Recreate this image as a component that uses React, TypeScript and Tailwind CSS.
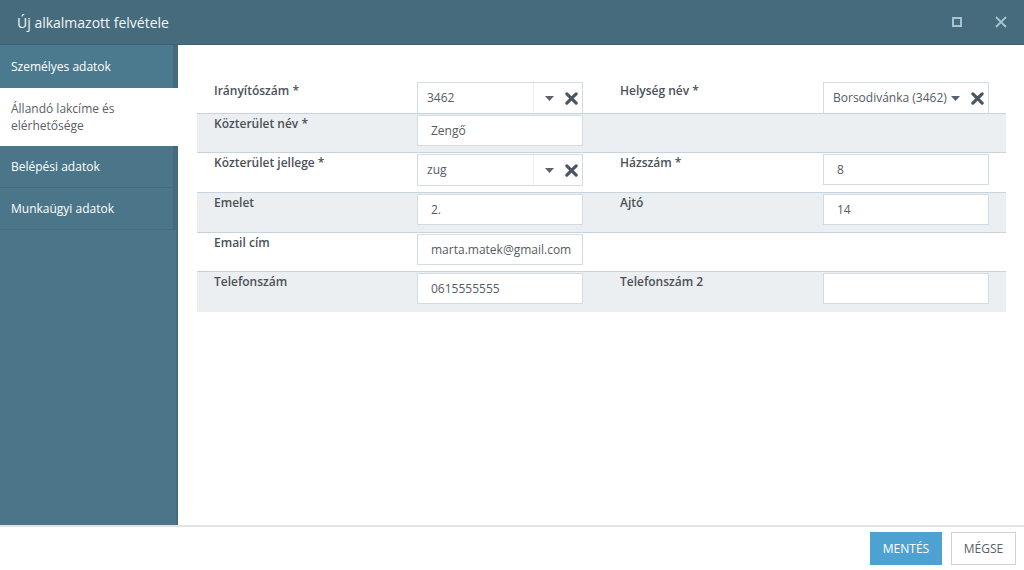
type Field = { label: string; value?: string; select?: boolean }
type Row = { left: Field; right?: Field; gray: boolean; h: string }

const ROWS: Row[] = [
  {
    left: { label: 'Irányítószám *', value: '3462', select: true },
    right: { label: 'Helység név *', value: 'Borsodivánka (3462)', select: true },
    gray: false,
    h: 'h-[33px]',
  },
  { left: { label: 'Közterület név *', value: 'Zengő' }, gray: true, h: 'h-[39px]' },
  {
    left: { label: 'Közterület jellege *', value: 'zug', select: true },
    right: { label: 'Házszám *', value: '8' },
    gray: false,
    h: 'h-[40px]',
  },
  {
    left: { label: 'Emelet', value: '2.' },
    right: { label: 'Ajtó', value: '14' },
    gray: true,
    h: 'h-[40px]',
  },
  { left: { label: 'Email cím', value: 'marta.matek@gmail.com' }, gray: false, h: 'h-[39px]' },
  {
    left: { label: 'Telefonszám', value: '0615555555' },
    right: { label: 'Telefonszám 2', value: '' },
    gray: true,
    h: 'h-[40px]',
  },
]

function XIcon() {
  return (
    <svg width="13" height="13" viewBox="0 0 14 14">
      <path d="M2 2 L12 12 M12 2 L2 12" stroke="#4a5560" strokeWidth="3.4" strokeLinecap="round" />
    </svg>
  )
}

function Caret() {
  return (
    <svg width="9" height="5" viewBox="0 0 9 5">
      <path d="M0 0 H9 L4.5 5 Z" fill="#59626b" />
    </svg>
  )
}

function Input({ f }: { f: Field }) {
  if (f.select) {
    const wide = f.value && f.value.length > 10
    return (
      <div className="flex h-[32px] w-[166px] items-center border border-[#d3dce3] bg-white text-[12px] text-[#555b61]">
        <div
          className={
            wide
              ? 'flex-1 pl-[9px] whitespace-nowrap'
              : 'flex h-full flex-1 items-center border-r border-[#eef1f3] pl-[9px]'
          }
        >
          {f.value}
        </div>
        <div className={wide ? 'flex items-center gap-[11px] pl-[4px] pr-[4px]' : 'flex items-center gap-[11px] pl-[11px] pr-[4px]'}>
          <Caret />
          <XIcon />
        </div>
      </div>
    )
  }
  return (
    <div className="flex h-[31px] w-[166px] items-center border border-[#d3dce3] bg-white pl-[13px] text-[12px] text-[#555b61]">
      {f.value}
    </div>
  )
}

function Cell({ f }: { f: Field }) {
  return (
    <div className="flex w-[406px] shrink-0">
      <div className="w-[220px] shrink-0 pl-[17px] pt-[1px] text-[12px] font-semibold text-[#4b5157]">{f.label}</div>
      <div className="pt-[1px]">
        <Input f={f} />
      </div>
    </div>
  )
}

export default function App() {
  const nav = ['Személyes adatok', 'Állandó lakcíme és elérhetősége', 'Belépési adatok', 'Munkaügyi adatok']
  return (
    <div
      className="flex h-[570px] w-[1024px] flex-col overflow-hidden bg-white"
      style={{ fontFamily: '"Open Sans", sans-serif' }}
    >
      <div className="flex h-[45px] items-center justify-between border-b border-[#3c6172] bg-[#456b7c] pl-[17px] pr-[17px]">
        <div className="text-[14px] text-[#f3f7f9]">Új alkalmazott felvétele</div>
        <div className="flex items-center gap-[33px]">
          <div className="h-[10px] w-[10px] border-[2px] border-[#a6c3cf]" />
          <svg width="12" height="12" viewBox="0 0 12 12">
            <path d="M1 1 L11 11 M11 1 L1 11" stroke="#a6c3cf" strokeWidth="1.8" />
          </svg>
        </div>
      </div>
      <div className="flex flex-1">
        <div className="flex w-[178px] shrink-0 flex-col bg-[#4b7689]">
          {nav.map((n, i) =>
            i === 1 ? (
              <div key={n} className="h-[58px] bg-white px-[11px] pt-[12px] text-[12px] leading-[17px] text-[#5a6066]">
                Állandó lakcíme és
                <br />
                elérhetősége
              </div>
            ) : (
              <div
                key={n}
                className={
                  i === 0
                    ? 'flex h-[43px] items-center border-r-[5px] border-[#446c7e] bg-[#4b7a8e] px-[11px] text-[12px] text-white'
                    : 'flex h-[42px] items-center border-r-[5px] border-b border-[#446c7e] bg-[#4b7689] px-[11px] text-[12px] text-white'
                }
              >
                {n}
              </div>
            ),
          )}
          <div className="flex-1 border-r-[2px] border-[#446c7e]" />
        </div>
        <div className="min-w-0 flex-1 pl-[19px] pr-[18px] pt-[36px]">
          {ROWS.map((r, i) => (
            <div
              key={i}
              className={[
                'flex overflow-hidden',
                r.h,
                r.gray ? 'bg-[#eceff2]' : 'bg-white',
                i < ROWS.length - 1 ? 'border-b border-[#c7d4de]' : '',
              ].join(' ')}
            >
              <Cell f={r.left} />
              {r.right && <Cell f={r.right} />}
            </div>
          ))}
        </div>
      </div>
      <div className="flex h-[45px] items-center justify-end gap-[9px] border-t-[2px] border-[#e1e4e6] pr-[8px]">
        <div className="flex h-[33px] w-[72px] items-center justify-center bg-[#4ea2d2] text-[12px] text-white">MENTÉS</div>
        <div className="flex h-[33px] w-[65px] items-center justify-center border border-[#cfd3d6] bg-white text-[12px] text-[#5a6066]">
          MÉGSE
        </div>
      </div>
    </div>
  )
}
